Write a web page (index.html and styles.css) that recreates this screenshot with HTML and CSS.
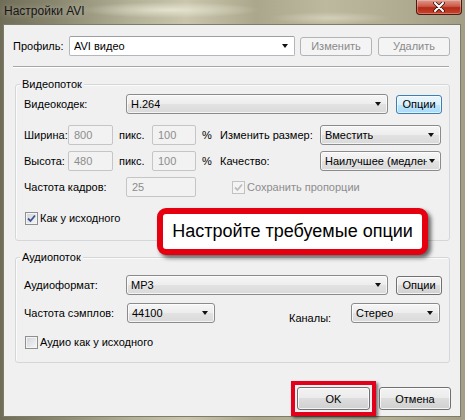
FILE: index.html
```html
<!DOCTYPE html>
<html lang="ru">
<head>
<meta charset="utf-8">
<title>Настройки AVI</title>
<link rel="stylesheet" href="styles.css">
</head>
<body>
<div class="window">
  <div class="titlebar">
    <span class="title">Настройки AVI</span>
    <span class="close">
      <svg width="12" height="10" viewBox="0 0 12 10"><path d="M2 1 L10 9 M10 1 L2 9" stroke="#3a1010" stroke-width="3.6" stroke-linecap="round"/><path d="M2 1 L10 9 M10 1 L2 9" stroke="#fff" stroke-width="2" stroke-linecap="round"/></svg>
    </span>
  </div>
  <div class="client">
    <div class="row">
      <span class="lbl w-profile">Профиль:</span>
      <div class="combo edit w-pcombo"><span class="val">AVI видео</span><i class="arrow"></i></div>
      <span class="btn disabled w72 ml5">Изменить</span>
      <span class="btn disabled w72 ml6">Удалить</span>
    </div>
    <div class="separator"></div>

    <section class="group video">
      <div class="group-title">Видеопоток</div>
      <div class="row mt3">
        <span class="lbl w102">Видеокодек:</span>
        <div class="combo w262"><span class="val">H.264</span><i class="arrow"></i></div>
        <span class="btn focus w46 ml8">Опции</span>
      </div>
      <div class="row mt11">
        <span class="lbl w44">Ширина:</span>
        <span class="input w45">800</span>
        <span class="lbl w33 ml6">пикс.</span>
        <span class="input w44">100</span>
        <span class="lbl w18 ml6">%</span>
        <span class="lbl w100">Изменить размер:</span>
        <div class="combo w121"><span class="val">Вместить</span><i class="arrow"></i></div>
      </div>
      <div class="row mt6">
        <span class="lbl w44">Высота:</span>
        <span class="input w45">480</span>
        <span class="lbl w33 ml6">пикс.</span>
        <span class="input w44">100</span>
        <span class="lbl w18 ml6">%</span>
        <span class="lbl w100">Качество:</span>
        <div class="combo w121 tight"><span class="val">Наилучшее (медлен</span><i class="arrow"></i></div>
      </div>
      <div class="row mt6">
        <span class="lbl w102">Частота кадров:</span>
        <span class="input w70">25</span>
        <label class="check disabled ml36">
          <span class="cb"><svg width="9" height="9" viewBox="0 0 9 9"><path d="M1 4.5 L3.5 7 L8 1.5" fill="none" stroke-width="1.8"/></svg></span>
          <span class="cb-text">Сохранить пропорции</span>
        </label>
      </div>
      <div class="row-cb mt15">
        <label class="check">
          <span class="cb"><svg width="9" height="9" viewBox="0 0 9 9"><path d="M1 4.5 L3.5 7 L8 1.5" fill="none" stroke-width="1.8"/></svg></span>
          <span class="cb-text">Как у исходного</span>
        </label>
      </div>
    </section>

    <section class="group audio">
      <div class="group-title">Аудиопоток</div>
      <div class="row mt11">
        <span class="lbl w102">Аудиоформат:</span>
        <div class="combo w262"><span class="val">MP3</span><i class="arrow"></i></div>
        <span class="btn w46 ml8">Опции</span>
      </div>
      <div class="row mt8">
        <span class="lbl w103">Частота сэмплов:</span>
        <div class="combo w88"><span class="val">44100</span><i class="arrow"></i></div>
        <span class="lbl low w62 ml74">Каналы:</span>
        <div class="combo w89"><span class="val">Стерео</span><i class="arrow"></i></div>
      </div>
      <div class="row-cb mt13">
        <label class="check">
          <span class="cb empty"></span>
          <span class="cb-text">Аудио как у исходного</span>
        </label>
      </div>
    </section>

    <div class="buttons">
      <span class="highlight"><span class="btn w73 h23">OK</span></span>
      <span class="btn w72 h23 ml3">Отмена</span>
    </div>
  </div>

  <div class="callout">Настройте требуемые опции</div>
</div>
</body>
</html>
```

FILE: styles.css
```css
* { box-sizing: border-box; margin: 0; padding: 0; }
html, body { width: 465px; height: 420px; overflow: hidden; }
body {
  font-family: "Liberation Sans", Arial, sans-serif;
  font-size: 11px;
  color: #000;
  background: #a9a68c;
}

.window {
  position: relative;
  width: 465px;
  height: 420px;
  display: flex;
  flex-direction: column;
  background:
    radial-gradient(ellipse 90px 8px at 170px 10px, rgba(240,237,218,.75), transparent),
    radial-gradient(ellipse 60px 6px at 330px 18px, rgba(225,222,200,.6), transparent),
    linear-gradient(90deg, #6f6c57 0%, #8a876f 12%, #b3b098 28%, #c9c6ad 40%, #aaa78d 55%, #bdb99f 70%, #b1ad93 85%, #a29f86 100%);
}

.titlebar {
  height: 24px;
  flex: none;
  display: flex;
  justify-content: space-between;
  align-items: flex-start;
  padding-left: 4px;
}
.title {
  font-size: 12px;
  line-height: 14px;
  margin-top: 4px;
  color: #151515;
  text-shadow: 0 0 6px rgba(255,255,255,.45);
}
.close {
  width: 46px;
  height: 15px;
  margin-right: 3px;
  border: 1px solid #4a1a14;
  border-top: none;
  border-radius: 0 0 4px 4px;
  background: linear-gradient(#dc9a8c, #cd5a48 45%, #b32b17 55%, #c8432c);
  box-shadow: inset 0 0 0 1px rgba(255,220,210,.35);
  display: flex;
  align-items: center;
  justify-content: center;
}

.client {
  flex: 1;
  margin: 0 4px 3px 3px;
  border: 1px solid #7d7b6a;
  background: #f0f0f0;
  padding: 11px 9px 0 9px;
  display: flex;
  flex-direction: column;
}

.row { display: flex; align-items: center; height: 20px; flex: none; }
.row-cb { display: flex; align-items: center; height: 13px; padding-left: 1px; }

.lbl { flex: none; white-space: nowrap; line-height: 13px; }
.lbl.low { padding-top: 10px; }

.w-profile { width: 56px; }
.w-pcombo { width: 226px; }
.w18 { width: 18px; } .w33 { width: 33px; } .w44 { width: 44px; } .w45 { width: 45px; }
.w46 { width: 46px; } .w62 { width: 62px; } .w70 { width: 70px; } .w72 { width: 72px; }
.w73 { width: 73px; } .w88 { width: 88px; } .w89 { width: 89px; } .w100 { width: 100px; }
.w102 { width: 102px; } .w103 { width: 103px; } .w121 { width: 121px; } .w262 { width: 262px; }
.ml3 { margin-left: 3px; } .ml5 { margin-left: 5px; } .ml6 { margin-left: 6px; } .ml8 { margin-left: 8px; }
.ml36 { margin-left: 36px; } .ml74 { margin-left: 74px; }
.mt3 { margin-top: 3px; } .mt6 { margin-top: 6px; } .mt8 { margin-top: 8px; } .mt11 { margin-top: 11px; }
.mt13 { margin-top: 13px; } .mt15 { margin-top: 15px; }

.combo {
  flex: none;
  height: 20px;
  display: flex;
  align-items: center;
  justify-content: space-between;
  padding: 0 6px 0 4px;
  border: 1px solid #8b8b8b;
  border-radius: 3px;
  background: linear-gradient(#f6f6f6, #ededed 50%, #e2e2e2 50%, #dadada);
  box-shadow: inset 0 0 0 1px rgba(255,255,255,.7);
  white-space: nowrap;
  overflow: hidden;
}
.combo.tight { padding-right: 5px; }
.combo.tight .arrow { margin-left: 2px; }
.combo.edit {
  background: #fff;
  border-color: #b3b6bb;
  border-top-color: #9c9fa4;
  border-radius: 2px;
  box-shadow: none;
}
.combo .val { overflow: hidden; }
.arrow {
  flex: none;
  width: 0;
  height: 0;
  border-left: 3.5px solid transparent;
  border-right: 3.5px solid transparent;
  border-top: 4px solid #111;
  margin-left: 4px;
}

.btn {
  flex: none;
  height: 19px;
  display: flex;
  align-items: center;
  justify-content: center;
  border: 1px solid #707070;
  border-radius: 3px;
  background: linear-gradient(#f3f3f3, #ebebeb 50%, #dddddd 50%, #d0d0d0);
  box-shadow: inset 0 0 0 1px rgba(255,255,255,.75);
  white-space: nowrap;
}
.btn.h23 { height: 23px; }
.btn.disabled {
  border-color: #b0b4b7;
  background: #f4f4f4;
  color: #8a8a8a;
  box-shadow: none;
}
.btn.focus {
  border-color: #3c7fb1;
  background: linear-gradient(#eaf6fd, #d9f0fc 50%, #bee6fd 50%, #a9daf6);
  box-shadow: inset 0 0 0 1px rgba(255,255,255,.6);
}

.input {
  flex: none;
  height: 20px;
  display: flex;
  align-items: center;
  padding-left: 5px;
  border: 1px solid #c5c5c5;
  border-radius: 2px;
  background: #f2f2f2;
  color: #8d8d8d;
}

.separator {
  margin-top: 10px;
  width: 436px;
  height: 2px;
  border-top: 1px solid #a6a6a6;
  border-bottom: 1px solid #fff;
  flex: none;
}

.group {
  flex: none;
  margin-left: 2px;
  width: 435px;
  border: 1px solid #d3d7da;
  border-radius: 3px;
  box-shadow: inset 1px 1px 0 #fbfbfb;
  padding: 0 7px 0 8px;
}
.group.video { margin-top: 16px; padding-bottom: 15px; }
.group.audio { margin-top: 16px; padding-bottom: 13px; }
.group-title {
  width: fit-content;
  margin: -7px 0 0 -4px;
  padding: 0 2px;
  line-height: 13px;
  background: #f0f0f0;
}

.check { display: flex; align-items: center; }
.cb {
  width: 13px;
  height: 13px;
  flex: none;
  border: 1px solid #8e8f8f;
  background: linear-gradient(135deg, #cfd3d9, #f7f7f7);
  box-shadow: inset 0 0 0 1px #f4f4f4;
  display: flex;
  align-items: center;
  justify-content: center;
}
.cb svg path { stroke: #3f5391; }
.cb-text { margin-left: 2px; line-height: 13px; white-space: nowrap; }
.check.disabled .cb { border-color: #c2c2c2; background: #f4f4f4; }
.check.disabled .cb svg path { stroke: #bdbdbd; }
.check.disabled .cb-text { color: #8d8d8d; }

.buttons {
  margin-top: 18px;
  display: flex;
  justify-content: flex-end;
  align-items: center;
}
.highlight {
  display: flex;
  padding: 2px;
  border: 4px solid #e2001a;
  box-shadow: 2px 2px 3px rgba(0,0,0,.55);
}

.callout {
  position: absolute;
  left: 157px;
  top: 208px;
  width: 271px;
  height: 47px;
  border: 6px solid #e6000f;
  border-radius: 9px;
  background: #fff;
  box-shadow: 3px 3px 4px rgba(0,0,0,.6);
  display: flex;
  align-items: center;
  justify-content: center;
  font-size: 18px;
  color: #000;
  white-space: nowrap;
}
```
